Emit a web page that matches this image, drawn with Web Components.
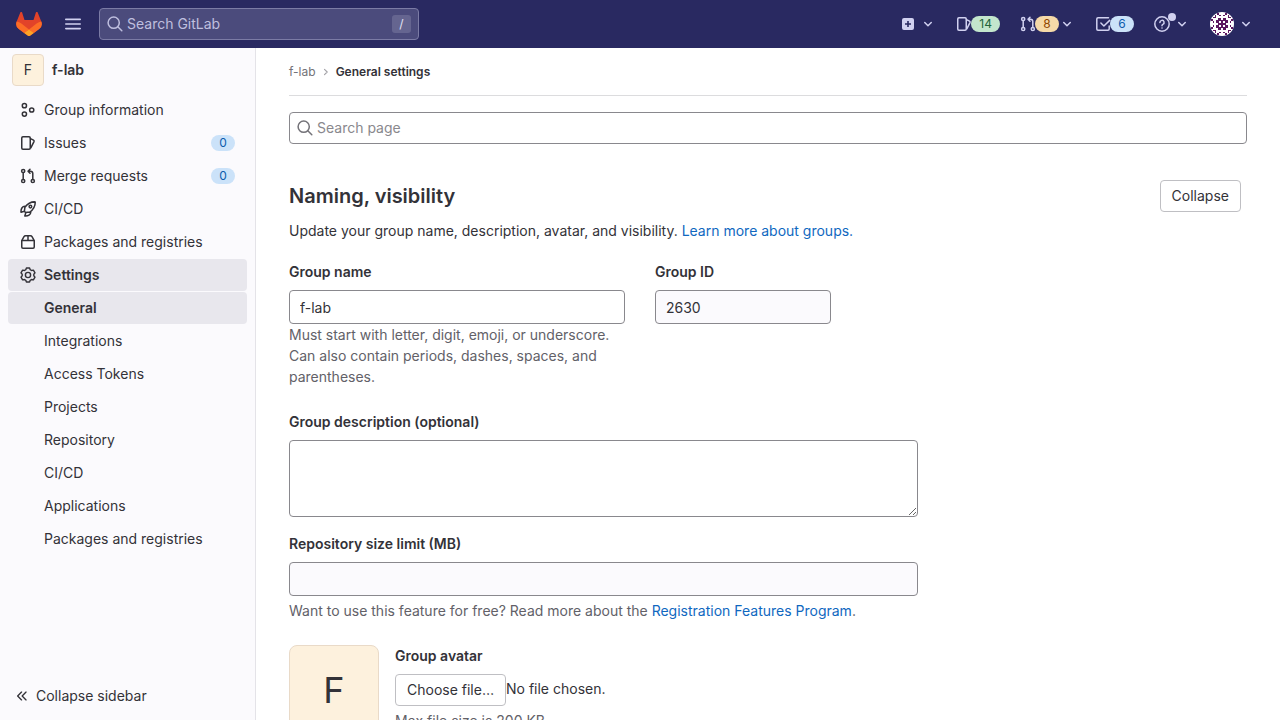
<!DOCTYPE html>
<html lang="en">
<head>
<meta charset="utf-8">
<title>General settings · f-lab · GitLab</title>
<style>
html, body { height: 100%; }
body { margin: 0; overflow: hidden; font-family: Inter, "Noto Sans", sans-serif; font-size: 14px; line-height: 20px; color: #333238; background: #fff; }
</style>
</head>
<body>
<gl-app></gl-app>
<script>
const define = (name, html, setup) => {
  const template = document.createElement('template');
  template.innerHTML = '<style>*{box-sizing:border-box}</style>' + html;
  customElements.define(name, class extends HTMLElement {
    constructor() {
      super();
      this.attachShadow({ mode: 'open', delegatesFocus: true }).append(template.content.cloneNode(true));
    }
    connectedCallback() { if (setup) setup(this, this.shadowRoot); }
  });
};

const line = (d, w = 1.5) => `<g fill="none" stroke="currentColor" stroke-width="${w}" stroke-linecap="round" stroke-linejoin="round">${d}</g>`;
const icons = {
  search: line('<circle cx="6.7" cy="6.7" r="5.6"/><path d="m10.8 10.8 4 4"/>'),
  menu: line('<path d="M.8 3.400h14.400M.8 8h14.400M.8 12.600h14.400"/>', 1.6),
  plus: '<path fill="currentColor" fill-rule="evenodd" d="M4 2h8a2 2 0 0 1 2 2v8a2 2 0 0 1-2 2H4a2 2 0 0 1-2-2V4a2 2 0 0 1 2-2zm3.2 3v2.2H5v1.6h2.2V11h1.6V8.8H11V7.2H8.8V5z"/>',
  down: line('<path d="m4.75 6.5 3.25 3.25 3.25-3.25"/>'),
  right: line('<path d="m6 4.400 3.600 3.600L6 11.600"/>'),
  group: line('<circle cx="4.400" cy="3.700" r="2.1"/><circle cx="4.400" cy="12.1" r="2.1"/><circle cx="11.7" cy="8" r="2.1"/>'),
  issues: line('<rect x="1.75" y="1.75" width="8.5" height="12.5" rx="1.2"/><path d="m10.5 3.6 3 1.5q.9.5.5 1.5l-3.2 6.2"/>'),
  merge: line('<circle cx="3.2" cy="3" r="1.6"/><circle cx="3.2" cy="13" r="1.6"/><circle cx="12.8" cy="13" r="1.6"/><path d="M3.2 4.6v6.800M12.8 11.400V5.6a2.4 2.4 0 0 0-2.4-2.4H8M10 1.200 8 3.2l2 2"/>'),
  rocket: line('<path d="M15.2.9c-4.6-.3-7.2 1.2-10.3 5.3l-.5 4.1 1.3 1.3 4.1-.5c4.1-3.1 5.6-5.7 5.4-10.2zM5 5.3c-2.8 0-4.2 2.6-4 5.9l3.4-.9M10.8 11c0 2.7-2.8 4.3-6 4l1.1-3.4"/><circle cx="10.4" cy="5.6" r="1.3"/>', 1.5),
  package: line('<path d="M1.75 6.6v6.4q0 1.2 1.2 1.2h10.1q1.2 0 1.2-1.2V6.6L12 2.7q-.5-.9-1.5-.9h-5q-1 0-1.5.9zM1.75 6.6h12.5M8 2v4.4"/>'),
  settings: line('<path d="m6.4 1-.6 1.7-1.3.8-1.9-.4L1 5.9l1.2 1.4v1.4L1 10.1l1.6 2.8 1.9-.4 1.3.8.6 1.7h3.2l.6-1.7 1.3-.8 1.9.4 1.6-2.8-1.2-1.4V7.3L15 5.9l-1.6-2.8-1.9.4-1.3-.8L9.6 1z"/><circle cx="8" cy="8" r="2.6"/>', 1.4),
  collapse: line('<path d="M7.400 2.800 2.200 8l5.200 5.200M13.400 2.800 8.200 8l5.200 5.200"/>', 1.8),
  todo: line('<path d="M14.2 10v3q0 1.2-1.2 1.2H3q-1.2 0-1.2-1.2V3Q1.800 1.800 3 1.800h10.500M5.900 7l3 3 5.800-5.600"/>'),
  help: line('<circle cx="8" cy="8" r="7.200"/><path d="M5.900 6.500a2.100 2.100 0 1 1 2.900 1.900q-.8.3-.8 1.300"/><path d="M8 11.900v.1"/>')
};
customElements.define('gl-icon', class extends HTMLElement {
  constructor() { super(); this.attachShadow({ mode: 'open' }); }
  connectedCallback() {
    this.shadowRoot.innerHTML = `<style>:host{display:block;flex:none;width:16px;height:16px}:host([small]){width:12px;height:12px}svg{display:block;width:100%;height:100%}</style><svg viewBox="0 0 16 16" aria-hidden="true">${icons[this.getAttribute('name')]}</svg>`;
  }
});

define('gl-logo', `<style>:host{display:block;width:26px;height:24px}svg{display:block;width:26px;height:24px}</style>
<svg viewBox="0 0 26 24" role="img" aria-label="GitLab"><path fill="#e24329" d="m25.300 9.500-.04-.1L21.700.4a1 1 0 0 0-1.800.1l-2.400 7.400H8.500L6.100.5A1 1 0 0 0 4.300.4L.7 9.400A6.500 6.500 0 0 0 2.900 17L8.300 21l2.700 2 1.600 1.200q.4.200.8 0L15 23l8-6a6.500 6.500 0 0 0 2.300-7.500z"/><path fill="#fc6d26" d="M25.300 9.500a12 12 0 0 0-4.700 2.100L13 17.400l4.900 3.600 5.300-4a6.500 6.500 0 0 0 2.100-7.500zM.7 9.500a12 12 0 0 1 4.700 2.100l7.600 5.800L8.100 21 2.800 17A6.500 6.500 0 0 1 .7 9.500z"/><path fill="#fca326" d="m8.100 21 4.500 3.200q.4.200.8 0l4.500-3.200-4.900-3.600z"/></svg>`);

define('gl-badge', `<style>
:host{display:block;flex:none;min-width:24px;padding:0 8px;border-radius:8px;background:#cbe2f9;color:#0b5cad;font-size:12px;line-height:16px;text-align:center}
:host([kind=success]){background:#c3e6cd;color:#24663b}
:host([kind=warning]){background:#f5d9a8;color:#8f4700}
</style><slot></slot>`);

define('gl-identicon', `<style>:host{display:block;width:24px;height:24px;flex:none}svg{display:block;border-radius:50%;background:#fff}</style>
<svg width="24" height="24" viewBox="0 0 24 24" role="img" aria-label="User avatar"><g fill="#5c1760"><path d="M8 6h3v2h2V6h3v2h2v3h-2v2h2v3h-2v2h-3v-2h-2v2H8v-2H6v-3h2v-2H6V8h2z"/><g id="rim"></g></g><path fill="#fff" d="M9 9h2v2H9zM13 9h2v2h-2zM9 13h2v2H9zM13 13h2v2h-2z"/></svg>`, (host, root) => {
  root.getElementById('rim').innerHTML = [0, 90, 180, 270].map(a => `<path transform="rotate(${a} 12 12)" d="M7 1h2v2H7zM15 1h2v2h-2zM9 3h2v1H9zM13 3h2v1h-2zM5 3h1v3H5zM18 3h1v3h-1zM3 5h2v1H3z"/>`).join('');
});

define('gl-topbar', `<style>
:host{display:flex;align-items:center;height:48px;padding:0 26px 0 16px;background:#292961;color:#d1d1f0}
a,button{color:inherit;text-decoration:none}
button{display:flex;border:0;background:none;padding:0;font:inherit}
.menu{margin:0 18px 0 23px}
.search{display:flex;align-items:center;width:320px;height:32px;padding:0 7px;gap:4px;border:1px solid #7b7ba5;border-radius:4px;background:#4b4b7c;color:#bfbfdf}
input{flex:1;min-width:0;border:0;background:none;outline:0;font:inherit;color:inherit;padding:0}
input::placeholder{color:#bfbfdf;opacity:1}
kbd{width:19px;height:18px;border-radius:3px;background:#656590;color:#e4e4f5;font:inherit;font-size:12px;line-height:18px;text-align:center}
nav{display:flex;align-items:center;gap:20px;margin-left:auto}
nav a,nav button{display:flex;align-items:center;height:24px}
nav gl-badge{margin-left:-1px}
.new,.help,.user{gap:4px}
.help{position:relative}
.help i{position:absolute;left:14px;top:1px;width:8px;height:8px;border-radius:50%;background:#d1d1f0}
</style>
<a href="#home"><gl-logo></gl-logo></a>
<button class="menu" aria-label="Menu"><gl-icon name="menu"></gl-icon></button>
<label class="search"><gl-icon name="search"></gl-icon><input type="text" placeholder="Search GitLab" aria-label="Search GitLab"><kbd>/</kbd></label>
<nav>
<button class="new" aria-label="Create new"><gl-icon name="plus"></gl-icon><gl-icon name="down"></gl-icon></button>
<a class="issues" href="#issues"><gl-icon name="issues"></gl-icon><gl-badge kind="success">14</gl-badge></a>
<button class="merge" aria-label="Merge requests"><gl-icon name="merge"></gl-icon><gl-badge kind="warning">8</gl-badge><gl-icon name="down"></gl-icon></button>
<a class="todo" href="#todos"><gl-icon name="todo"></gl-icon><gl-badge>6</gl-badge></a>
<button class="help" aria-label="Help"><gl-icon name="help"></gl-icon><i></i><gl-icon name="down"></gl-icon></button>
<button class="user" aria-label="User menu"><gl-identicon></gl-identicon><gl-icon name="down"></gl-icon></button>
</nav>`);

define('gl-nav-item', `<style>
:host{display:block}
a{display:flex;align-items:center;gap:8px;height:32px;padding:0 12px;border-radius:4px;color:#333238;text-decoration:none}
:host([active]) a{background:#e8e7ed;font-weight:600}
.pad{width:16px;flex:none}
.label{flex:1;white-space:nowrap}
</style><a><span class="pad"></span><span class="label"><slot></slot></span><slot name="badge"></slot></a>`, (host, root) => {
  root.querySelector('a').href = host.getAttribute('href');
  const icon = host.getAttribute('icon');
  if (icon) root.querySelector('.pad').innerHTML = `<gl-icon name="${icon}"></gl-icon>`;
});

define('gl-avatar', `<style>
:host{display:flex;flex:none;align-items:center;justify-content:center;width:32px;height:32px;border:1px solid #e9dac8;border-radius:4px;background:#fdf1dd;color:#333238;box-sizing:border-box}
:host([large]){width:90px;height:90px;border-radius:8px;font-size:36px;line-height:40px}
</style><slot></slot>`);

define('gl-sidebar', `<style>
:host{display:flex;flex-direction:column;background:#fbfafd;border-right:1px solid #e4e3e8}
.context{display:flex;align-items:center;gap:8px;padding:6px 12px 8px;color:#333238;text-decoration:none;font-weight:600}
gl-avatar{font-weight:400}
nav{display:grid;gap:1px;padding:0 8px}
.toggle{display:flex;align-items:center;gap:8px;height:48px;margin-top:auto;padding:0 16px;border:0;background:none;font:inherit;color:#333238}
</style>
<a class="context" href="#group"><gl-avatar>F</gl-avatar>f-lab</a>
<nav>
<gl-nav-item icon="group" href="#info">Group information</gl-nav-item>
<gl-nav-item icon="issues" href="#issues">Issues<gl-badge slot="badge">0</gl-badge></gl-nav-item>
<gl-nav-item icon="merge" href="#merge">Merge requests<gl-badge slot="badge">0</gl-badge></gl-nav-item>
<gl-nav-item icon="rocket" href="#ci">CI/CD</gl-nav-item>
<gl-nav-item icon="package" href="#packages">Packages and registries</gl-nav-item>
<gl-nav-item icon="settings" href="#settings" active>Settings</gl-nav-item>
<gl-nav-item href="#general" active>General</gl-nav-item>
<gl-nav-item href="#integrations">Integrations</gl-nav-item>
<gl-nav-item href="#tokens">Access Tokens</gl-nav-item>
<gl-nav-item href="#projects">Projects</gl-nav-item>
<gl-nav-item href="#repository">Repository</gl-nav-item>
<gl-nav-item href="#ci-settings">CI/CD</gl-nav-item>
<gl-nav-item href="#applications">Applications</gl-nav-item>
<gl-nav-item href="#package-settings">Packages and registries</gl-nav-item>
</nav>
<button class="toggle"><gl-icon small name="collapse"></gl-icon>Collapse sidebar</button>`);

define('gl-button', `<style>:host{display:block;flex:none}
button{height:32px;padding:0 11px;border:1px solid #bfbfc3;border-radius:4px;background:#fff;color:#333238;font:inherit;white-space:nowrap}</style><button type="button"><slot></slot></button>`);

define('gl-breadcrumbs', `<style>
:host{display:block;border-bottom:1px solid #dcdcde}
ol{display:flex;align-items:center;gap:4px;height:47px;margin:0;padding:0;list-style:none;font-size:12px;line-height:16px}
li{display:flex;align-items:center;gap:4px}
a{color:#737278;text-decoration:none}
li:last-child a{color:#333238;font-weight:600}
gl-icon{color:#a4a3a8}
</style><ol><li><a href="#group">f-lab</a></li><li><gl-icon small name="right"></gl-icon></li><li><a href="#general">General settings</a></li></ol>`);

define('gl-settings', `<style>
:host{display:block;padding:0 33px}
.search{display:flex;align-items:center;gap:4px;height:32px;margin:16px 0 36px;padding:0 7px;border:1px solid #89888d;border-radius:4px;color:#737278}
.search input{flex:1;border:0;outline:0;padding:0;background:none;height:auto}
input,textarea{display:block;width:100%;height:34px;padding:0 10px;border:1px solid #89888d;border-radius:4px;background:#fff;color:#333238;font:inherit}
input::placeholder{color:#89888d;opacity:1}
input[readonly],input:disabled{background:#fbfafd}
textarea{height:77px;padding:8px 10px;resize:vertical}
a{color:#1068bf;text-decoration:none}
.head{display:flex;align-items:center;justify-content:space-between;padding-right:6px}
h2{margin:0;font-size:20px;line-height:32px;font-weight:600}
p{margin:0;line-height:21px}
.intro{margin:8px 0 20px}
form{max-width:629px}
label,.label{display:block;margin-bottom:8px;font-weight:600;line-height:21px}
.row{display:grid;grid-template-columns:336px 176px;gap:30px;margin-bottom:24px}
.help{color:#626168}
.field{margin-bottom:16px}
.limit .help{margin-top:4px}
.avatar{display:flex;gap:16px;margin-top:24px}
.file{display:flex;line-height:30px;margin-bottom:4px}
.file gl-button{line-height:20px}
</style>
<gl-breadcrumbs></gl-breadcrumbs>
<div class="search"><gl-icon name="search"></gl-icon><input type="text" placeholder="Search page" aria-label="Search page"></div>
<section>
<div class="head"><h2>Naming, visibility</h2><gl-button>Collapse</gl-button></div>
<p class="intro">Update your group name, description, avatar, and visibility. <a href="#learn">Learn more about groups.</a></p>
<form>
<div class="row">
<div><label for="name">Group name</label><input id="name" type="text" value="f-lab"><p class="help">Must start with letter, digit, emoji, or underscore. Can also contain periods, dashes, spaces, and parentheses.</p></div>
<div><label for="gid">Group ID</label><input id="gid" type="text" value="2630" readonly></div>
</div>
<div class="field"><label for="desc">Group description (optional)</label><textarea id="desc"></textarea></div>
<div class="limit"><label for="limit">Repository size limit (MB)</label><input id="limit" type="text" disabled><p class="help">Want to use this feature for free? Read more about the <a href="#program">Registration Features Program</a>.</p></div>
<div class="avatar"><gl-avatar large>F</gl-avatar><div><span class="label">Group avatar</span><div class="file"><gl-button>Choose file…</gl-button><span>No file chosen.</span></div><p class="help">Max file size is 200 KB.</p></div></div>
</form>
</section>`);

define('gl-app', `<style>
:host{display:flex;flex-direction:column;height:100vh}
gl-topbar{flex:none}
.body{display:grid;grid-template-columns:256px minmax(0,1fr);flex:1;min-height:0}
main{overflow:hidden}
</style><gl-topbar></gl-topbar><div class="body"><gl-sidebar></gl-sidebar><main><gl-settings></gl-settings></main></div>`);
</script>
</body>
</html>
